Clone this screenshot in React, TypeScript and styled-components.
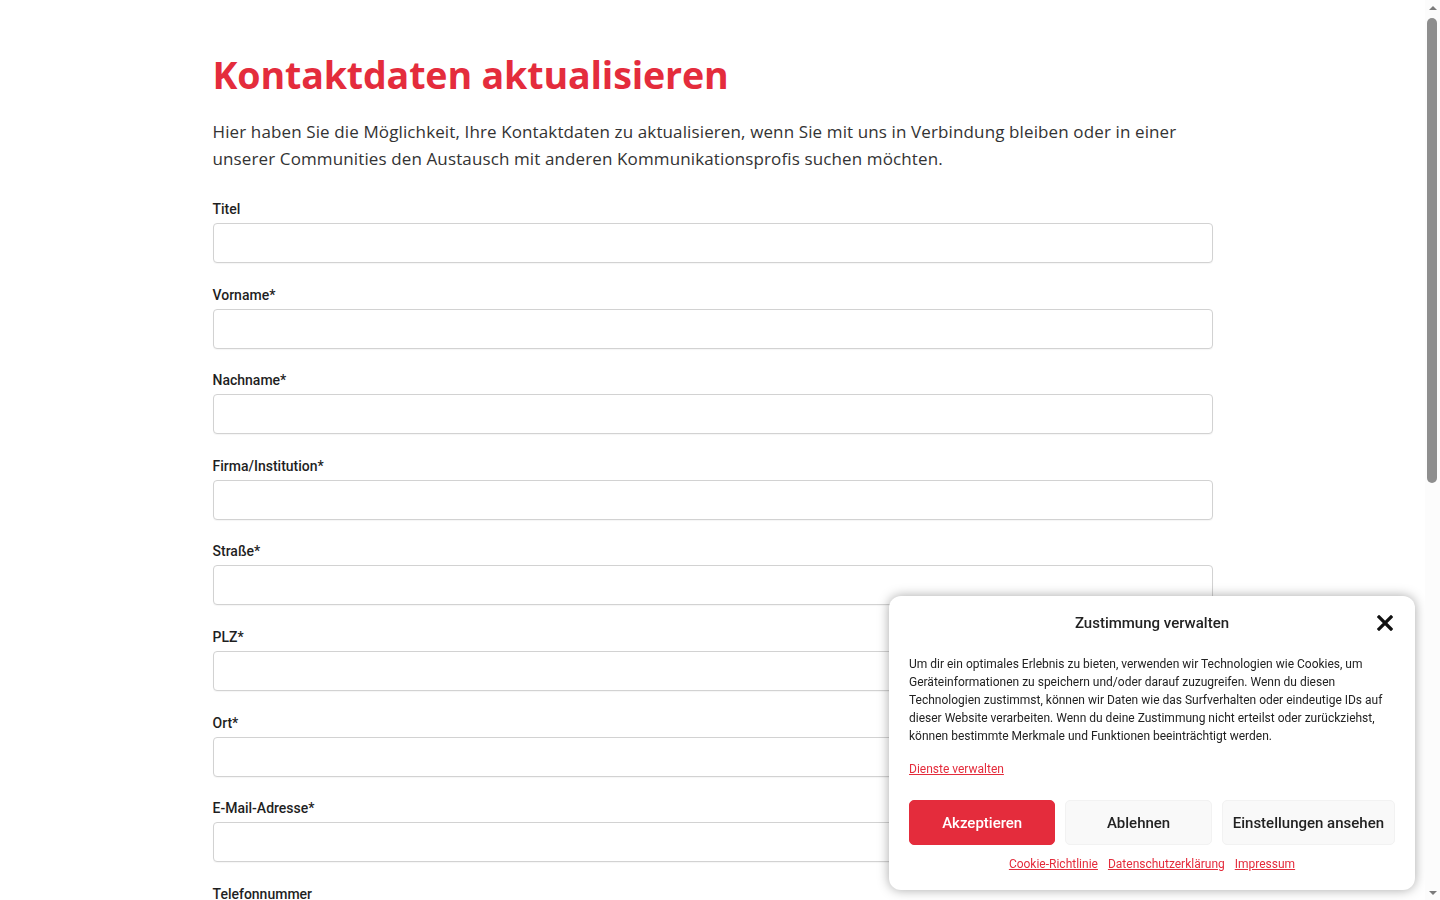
import React from "react";
import styled, {createGlobalStyle} from "styled-components";

const red = "#e42c3c";

const GlobalStyle = createGlobalStyle`
    html, body {
        margin: 0;
        padding: 0;
        background: #fff;
    }
    body {
        font-family: Roboto, "Liberation Sans", sans-serif;
        color: #222;
        /* room for the window scrollbar seen in the screenshot */
        padding-right: 15px;
    }
    * {
        box-sizing: border-box;
    }
`;

const Page = styled.main`
    max-width: 1000px;
    margin: 0 auto;
    padding: 50px 0 120px;
`;

const Title = styled.h1`
    font-family: "Open Sans", "Liberation Sans", sans-serif;
    font-weight: 700;
    font-size: 37.6px;
    line-height: 50px;
    letter-spacing: -0.15px;
    color: ${red};
    margin: 0 0 18px;
`;

const Intro = styled.p`
    font-family: "Open Sans", "Liberation Sans", sans-serif;
    font-weight: 400;
    font-size: 17px;
    line-height: 27px;
    letter-spacing: 0.12px;
    color: #333;
    margin: 0 0 27px;
`;

const Form = styled.form`
    display: flex;
    flex-direction: column;
`;

const Field = styled.div`
    display: flex;
    flex-direction: column;
    gap: 4px;
    margin-bottom: 21.6px;
`;

const Label = styled.label`
    font-size: 14px;
    font-weight: 500;
    line-height: 20px;
    color: #1f1f1f;
`;

const Input = styled.input`
    height: 40px;
    width: 100%;
    border: 1px solid #d2d2d2;
    border-radius: 4px;
    padding: 0 12px;
    font-family: Roboto, sans-serif;
    font-size: 14px;
    outline: none;
    box-shadow: 0 1px 1px rgba(0, 0, 0, 0.04);
`;

const CheckRow = styled.label`
    display: flex;
    align-items: center;
    gap: 10px;
    font-size: 14px;
    line-height: 22px;
    color: #333;
    margin-bottom: 10px;
`;

const Submit = styled.button`
    align-self: flex-start;
    margin-top: 24px;
    height: 46px;
    padding: 0 32px;
    border: none;
    border-radius: 5px;
    background: ${red};
    color: #fff;
    font-family: Roboto, sans-serif;
    font-weight: 500;
    font-size: 15px;
`;

const Rail = styled.div`
    position: fixed;
    top: 0;
    right: 0;
    bottom: 0;
    width: 15px;
    background: #fcfcfc;
    display: flex;
    flex-direction: column;
    align-items: center;
    z-index: 20;
`;

const Arrow = styled.div<{ $down?: boolean }>`
    height: 15px;
    width: 15px;
    display: flex;
    align-items: center;
    justify-content: center;
    &::after {
        content: "";
        border-left: 4px solid transparent;
        border-right: 4px solid transparent;
        ${p => (p.$down ? "border-top: 4px solid #7b7b7b;" : "border-bottom: 4px solid #7b7b7b;")}
    }
`;

const Thumb = styled.div`
    width: 10px;
    height: 465px;
    margin: 3px 1px 0 0;
    border-radius: 5px;
    background: #8e8e8e;
`;

const Spacer = styled.div`
    flex: 1;
`;

const Banner = styled.div`
    position: fixed;
    right: 25px;
    bottom: 10px;
    width: 526px;
    padding: 17px 20px 17px;
    background: #fff;
    border-radius: 12px;
    box-shadow: 0 0 12px rgba(0, 0, 0, 0.35);
    z-index: 10;
`;

const BannerHead = styled.div`
    position: relative;
    display: flex;
    justify-content: center;
    align-items: center;
    height: 20px;
`;

const BannerTitle = styled.div`
    font-size: 15px;
    font-weight: 500;
    color: #222;
    line-height: 20px;
`;

const Close = styled.button`
    position: absolute;
    right: 2px;
    top: 2px;
    width: 16px;
    height: 16px;
    border: none;
    padding: 0;
    background: none;
    display: flex;
`;

const BannerText = styled.p`
    margin: 22px 0 0;
    font-size: 12px;
    line-height: 18px;
    color: #222;
`;

const Link = styled.a`
    color: ${red};
    text-decoration: underline;
    font-size: 12px;
    line-height: 18px;
`;

const ManageRow = styled.div`
    margin-top: 13px;
`;

const Buttons = styled.div`
    display: flex;
    gap: 10px;
    margin-top: 22px;
`;

const ConsentButton = styled.button<{ $primary?: boolean }>`
    flex: 1;
    height: 45px;
    padding: 0 10px;
    white-space: nowrap;
    border-radius: 5px;
    font-family: Roboto, sans-serif;
    font-size: 15px;
    font-weight: 500;
    border: 1px solid ${p => (p.$primary ? red : "#f2f2f2")};
    background: ${p => (p.$primary ? red : "#f9f9f9")};
    color: ${p => (p.$primary ? "#fff" : "#222")};
`;

const Footer = styled.div`
    display: flex;
    justify-content: center;
    gap: 10px;
    margin-top: 10px;
`;

const fields = [
    "Titel",
    "Vorname*",
    "Nachname*",
    "Firma/Institution*",
    "Straße*",
    "PLZ*",
    "Ort*",
    "E-Mail-Adresse*",
    "Telefonnummer",
    "Mobilnummer",
    "Position",
    "Abteilung",
    "Website",
];

const CloseIcon = () => (
    <svg width="16" height="16" viewBox="0 0 16 16">
        <path d="M2 2 L14 14 M14 2 L2 14" stroke="#111" strokeWidth="3.2" strokeLinecap="square"/>
    </svg>
);

export default function App() {
    return (
        <>
            <GlobalStyle/>
            <Page>
                <Title>Kontaktdaten aktualisieren</Title>
                <Intro>
                    Hier haben Sie die Möglichkeit, Ihre Kontaktdaten zu aktualisieren, wenn Sie mit uns in Verbindung
                    bleiben oder in einer unserer Communities den Austausch mit anderen Kommunikationsprofis suchen möchten.
                </Intro>
                <Form onSubmit={e => e.preventDefault()}>
                    {fields.map(f => (
                        <Field key={f}>
                            <Label>{f}</Label>
                            <Input type="text"/>
                        </Field>
                    ))}
                    <Field>
                        <Label>Communities</Label>
                    </Field>
                    <CheckRow><input type="checkbox"/>Community Interne Kommunikation</CheckRow>
                    <CheckRow><input type="checkbox"/>Community Pressearbeit</CheckRow>
                    <CheckRow><input type="checkbox"/>Community Digitale Kommunikation</CheckRow>
                    <CheckRow><input type="checkbox"/>Ich habe die Datenschutzerklärung gelesen und akzeptiert.*</CheckRow>
                    <Submit type="submit">Absenden</Submit>
                </Form>
            </Page>
            <Rail aria-hidden>
                <Arrow/>
                <Thumb/>
                <Spacer/>
                <Arrow $down/>
            </Rail>
            <Banner>
                <BannerHead>
                    <BannerTitle>Zustimmung verwalten</BannerTitle>
                    <Close aria-label="Schließen"><CloseIcon/></Close>
                </BannerHead>
                <BannerText>
                    Um dir ein optimales Erlebnis zu bieten, verwenden wir Technologien wie Cookies, um
                    Geräteinformationen zu speichern und/oder darauf zuzugreifen. Wenn du diesen Technologien
                    zustimmst, können wir Daten wie das Surfverhalten oder eindeutige IDs auf dieser Website
                    verarbeiten. Wenn du deine Zustimmung nicht erteilst oder zurückziehst, können bestimmte Merkmale
                    und Funktionen beeinträchtigt werden.
                </BannerText>
                <ManageRow><Link href="#">Dienste verwalten</Link></ManageRow>
                <Buttons>
                    <ConsentButton $primary>Akzeptieren</ConsentButton>
                    <ConsentButton>Ablehnen</ConsentButton>
                    <ConsentButton>Einstellungen ansehen</ConsentButton>
                </Buttons>
                <Footer>
                    <Link href="#">Cookie-Richtlinie</Link>
                    <Link href="#">Datenschutzerklärung</Link>
                    <Link href="#">Impressum</Link>
                </Footer>
            </Banner>
        </>
    );
}
